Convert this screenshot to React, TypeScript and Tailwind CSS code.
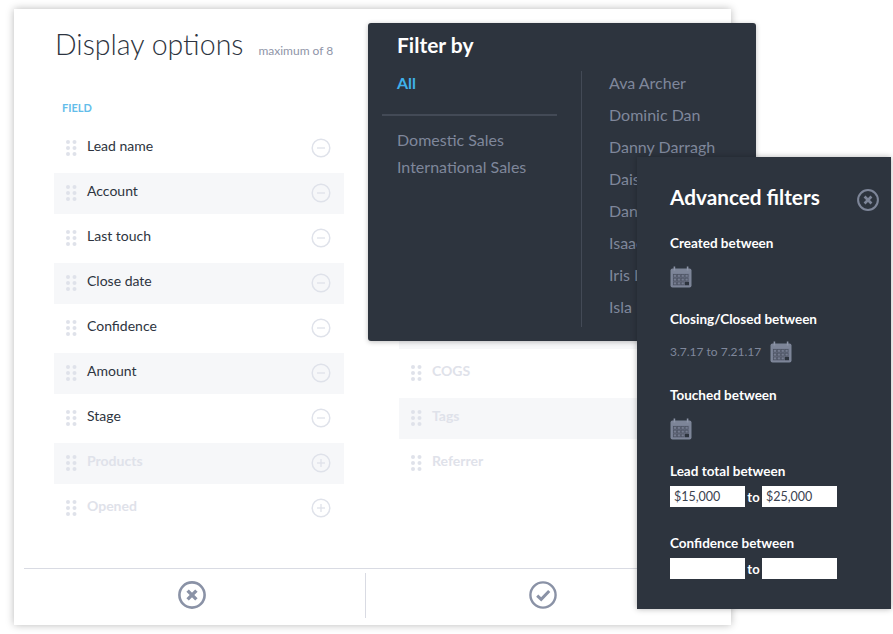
import { useState } from "react";

type Field = { name: string; active: boolean };

const leftFields: Field[] = [
  { name: "Lead name", active: true },
  { name: "Account", active: true },
  { name: "Last touch", active: true },
  { name: "Close date", active: true },
  { name: "Confidence", active: true },
  { name: "Amount", active: true },
  { name: "Stage", active: true },
  { name: "Products", active: false },
  { name: "Opened", active: false },
];

const rightFields: Field[] = [
  { name: "COGS", active: false },
  { name: "Tags", active: false },
  { name: "Referrer", active: false },
];

const people = [
  "Ava Archer",
  "Dominic Dan",
  "Danny Darragh",
  "Daisy Lee",
  "Dan Lee",
  "Isaac Ives",
  "Iris Ives",
  "Isla Bell",
];

function DragDots() {
  return (
    <svg width="11" height="16" viewBox="0 0 11 16" className="-mt-[2px] shrink-0">
      {[2, 8, 14].map((y) =>
        [2, 8.5].map((x) => <circle key={`${x}-${y}`} cx={x} cy={y} r="2" fill="#dfe2ea" />),
      )}
    </svg>
  );
}

function RoundToggle({ active }: { active: boolean }) {
  return (
    <svg width="20" height="20" viewBox="0 0 20 20" className="-mt-[1px] shrink-0">
      <circle cx="10" cy="10" r="8.8" fill="none" stroke="#dfe2ea" strokeWidth="1.5" />
      <path d="M6 10h8" stroke="#dfe2ea" strokeWidth="1.3" />
      {!active && <path d="M10 6v8" stroke="#dfe2ea" strokeWidth="1.3" />}
    </svg>
  );
}

function FieldRow({ field, striped }: { field: Field; striped: boolean }) {
  return (
    <div className={`flex h-[41px] items-center pl-[12px] pr-[13px] ${striped ? "bg-[#f6f7f9]" : ""}`}>
      <DragDots />
      <span
        className={`ml-[10px] -mt-[5px] flex-1 text-[14px] leading-[20px] ${
          field.active ? "text-[#2d3440]" : "font-bold text-[#dfe2ea]"
        }`}
      >
        {field.name}
      </span>
      <RoundToggle active={field.active} />
    </div>
  );
}

function CircleX({ size, color }: { size: number; color: string }) {
  return (
    <svg width={size} height={size} viewBox="0 0 28 28">
      <circle cx="14" cy="14" r="12.6" fill="none" stroke={color} strokeWidth="2.6" />
      <path d="M9.6 9.6l8.8 8.8M18.4 9.6l-8.8 8.8" stroke={color} strokeWidth="3.4" />
    </svg>
  );
}

function CircleCheck() {
  return (
    <svg width="28" height="28" viewBox="0 0 28 28">
      <circle cx="14" cy="14" r="12.6" fill="none" stroke="#8a92a6" strokeWidth="2.4" />
      <path d="M8.2 14.6l4 3.8 8-8.4" fill="none" stroke="#8a92a6" strokeWidth="3" />
    </svg>
  );
}

function CalendarIcon() {
  const cells = [];
  for (let row = 0; row < 3; row++) {
    for (let col = 0; col < 4; col++) {
      if (row === 2 && col === 3) continue;
      cells.push(
        <rect
          key={`${row}-${col}`}
          x={3.4 + col * 3.9}
          y={8.4 + row * 3.8}
          width="3"
          height="2.8"
          fill="none"
          stroke="#4a5160"
          strokeWidth="0.7"
        />,
      );
    }
  }
  return (
    <svg width="22" height="22" viewBox="0 0 22 22" className="shrink-0">
      <rect x="0.5" y="2.5" width="21" height="19" rx="2" fill="#7d8598" />
      <rect x="2.5" y="7.5" width="17" height="12.5" fill="#757c90" />
      <rect x="3.6" y="0.5" width="1.6" height="4" fill="#8d95a8" />
      <rect x="16.8" y="0.5" width="1.6" height="4" fill="#8d95a8" />
      {cells}
      <rect x="15" y="15.8" width="4" height="3.4" fill="#2d343e" />
    </svg>
  );
}

function RangeInputs({ from, to }: { from: string; to: string }) {
  return (
    <div className="mt-[6px] flex items-center">
      <input
        readOnly
        value={from}
        className="h-[21px] w-[75px] bg-white px-[4px] text-[12.5px] text-[#3a4250] outline-none"
      />
      <span className="w-[17px] text-center text-[13px] font-bold leading-[18px] text-white">to</span>
      <input
        readOnly
        value={to}
        className="h-[21px] w-[75px] bg-white px-[4px] text-[12.5px] text-[#3a4250] outline-none"
      />
    </div>
  );
}

function FilterLabel({ children }: { children: string }) {
  return <div className="text-[13.5px] font-bold leading-[18px] text-white">{children}</div>;
}

export default function App() {
  const [selected] = useState("All");

  return (
    <div className="relative h-[634px] w-[893px] overflow-hidden bg-white font-['Lato',sans-serif]">
      {/* display options card */}
      <div className="ml-[14px] mt-[9px] flex h-[616px] w-[717px] flex-col bg-white shadow-[0_0_8px_rgba(0,0,0,0.28)]">
        <div className="flex items-baseline pl-[41px] pt-[16px]">
          <h1 className="text-[28.5px] font-light leading-[38px] text-[#2d3440]">Display options</h1>
          <span className="ml-[15px] text-[12px] text-[#8f95a8]">maximum of 8</span>
        </div>
        <div className="ml-[48px] mt-[37px] text-[11px] font-bold leading-[16px] text-[#63bdea]">FIELD</div>

        <div className="mt-[12px] flex h-[401px] pl-[40px]">
          <div className="flex w-[290px] flex-col gap-[4px]">
            {leftFields.map((field, i) => (
              <FieldRow key={field.name} field={field} striped={i % 2 === 1} />
            ))}
          </div>
          <div className="ml-[55px] flex w-[290px] flex-col gap-[4px] pt-[180px]">
            <div className="h-[41px] bg-[#f6f7f9]" />
            {rightFields.map((field, i) => (
              <FieldRow key={field.name} field={field} striped={i % 2 === 1} />
            ))}
          </div>
        </div>

        <div className="mx-[10px] mt-[39px] flex h-[57px] border-t border-[#d9dbe3] pt-[4px]">
          <div className="flex h-[45px] w-[342px] items-center justify-center border-r border-[#d9dbe3] pb-[2px] pr-[5px]">
            <CircleX size={28} color="#8a92a6" />
          </div>
          <div className="flex h-[45px] flex-1 items-center justify-center pb-[2px] pr-[2px]">
            <CircleCheck />
          </div>
        </div>
      </div>

      {/* filter by popover */}
      <div className="absolute left-[368px] top-[23px] h-[318px] w-[388px] rounded-[3px] bg-[#2d343e] shadow-[0_1px_5px_rgba(0,0,0,0.25)]">
        <h2 className="absolute left-[29px] top-[8px] text-[21px] font-bold leading-[28px] text-white">Filter by</h2>
        <div className="flex pt-[48px]">
          <div className="h-[256px] w-[214px] border-r border-[#434a56] pl-[14px]">
            <div className="-mt-[1px] pl-[15px] text-[16px] font-bold leading-[26px] text-[#3fb0ea]">{selected}</div>
            <div className="mr-[24px] mt-[18px] h-[2px] bg-[#434a56]" />
            <div className="mt-[11px] flex flex-col gap-[2px] pl-[15px] text-[16px] leading-[26px] text-[#7f879b]">
              <span>Domestic Sales</span>
              <span className="-mt-[1px]">International Sales</span>
            </div>
          </div>
          <div className="-mt-[1px] flex flex-col gap-[6px] pl-[27px] text-[16px] leading-[26px] text-[#7f879b]">
            {people.map((person) => (
              <span key={person}>{person}</span>
            ))}
          </div>
        </div>
      </div>

      {/* advanced filters popover */}
      <div className="absolute left-[637px] top-[157px] h-[452px] w-[254px] bg-[#2d343e] pl-[33px] pt-[26px] shadow-[0_0_6px_rgba(0,0,0,0.3)]">
        <div className="flex items-center justify-between pr-[12px]">
          <h2 className="text-[20.75px] font-bold leading-[28px] text-white">Advanced filters</h2>
          <div className="mt-[6px]">
            <CircleX size={22} color="#7d8598" />
          </div>
        </div>
        <div className="mt-[23px]">
          <FilterLabel>Created between</FilterLabel>
        </div>
        <div className="mt-[14px]">
          <CalendarIcon />
        </div>
        <div className="mt-[22px]">
          <FilterLabel>Closing/Closed between</FilterLabel>
        </div>
        <div className="mt-[13px] flex items-center gap-[9px]">
          <span className="text-[12px] text-[#7f879b]">3.7.17 to 7.21.17</span>
          <CalendarIcon />
        </div>
        <div className="mt-[23px]">
          <FilterLabel>Touched between</FilterLabel>
        </div>
        <div className="mt-[14px]">
          <CalendarIcon />
        </div>
        <div className="mt-[22px]">
          <FilterLabel>Lead total between</FilterLabel>
        </div>
        <RangeInputs from="$15,000" to="$25,000" />
        <div className="mt-[27px]">
          <FilterLabel>Confidence between</FilterLabel>
        </div>
        <RangeInputs from="" to="" />
      </div>
    </div>
  );
}
